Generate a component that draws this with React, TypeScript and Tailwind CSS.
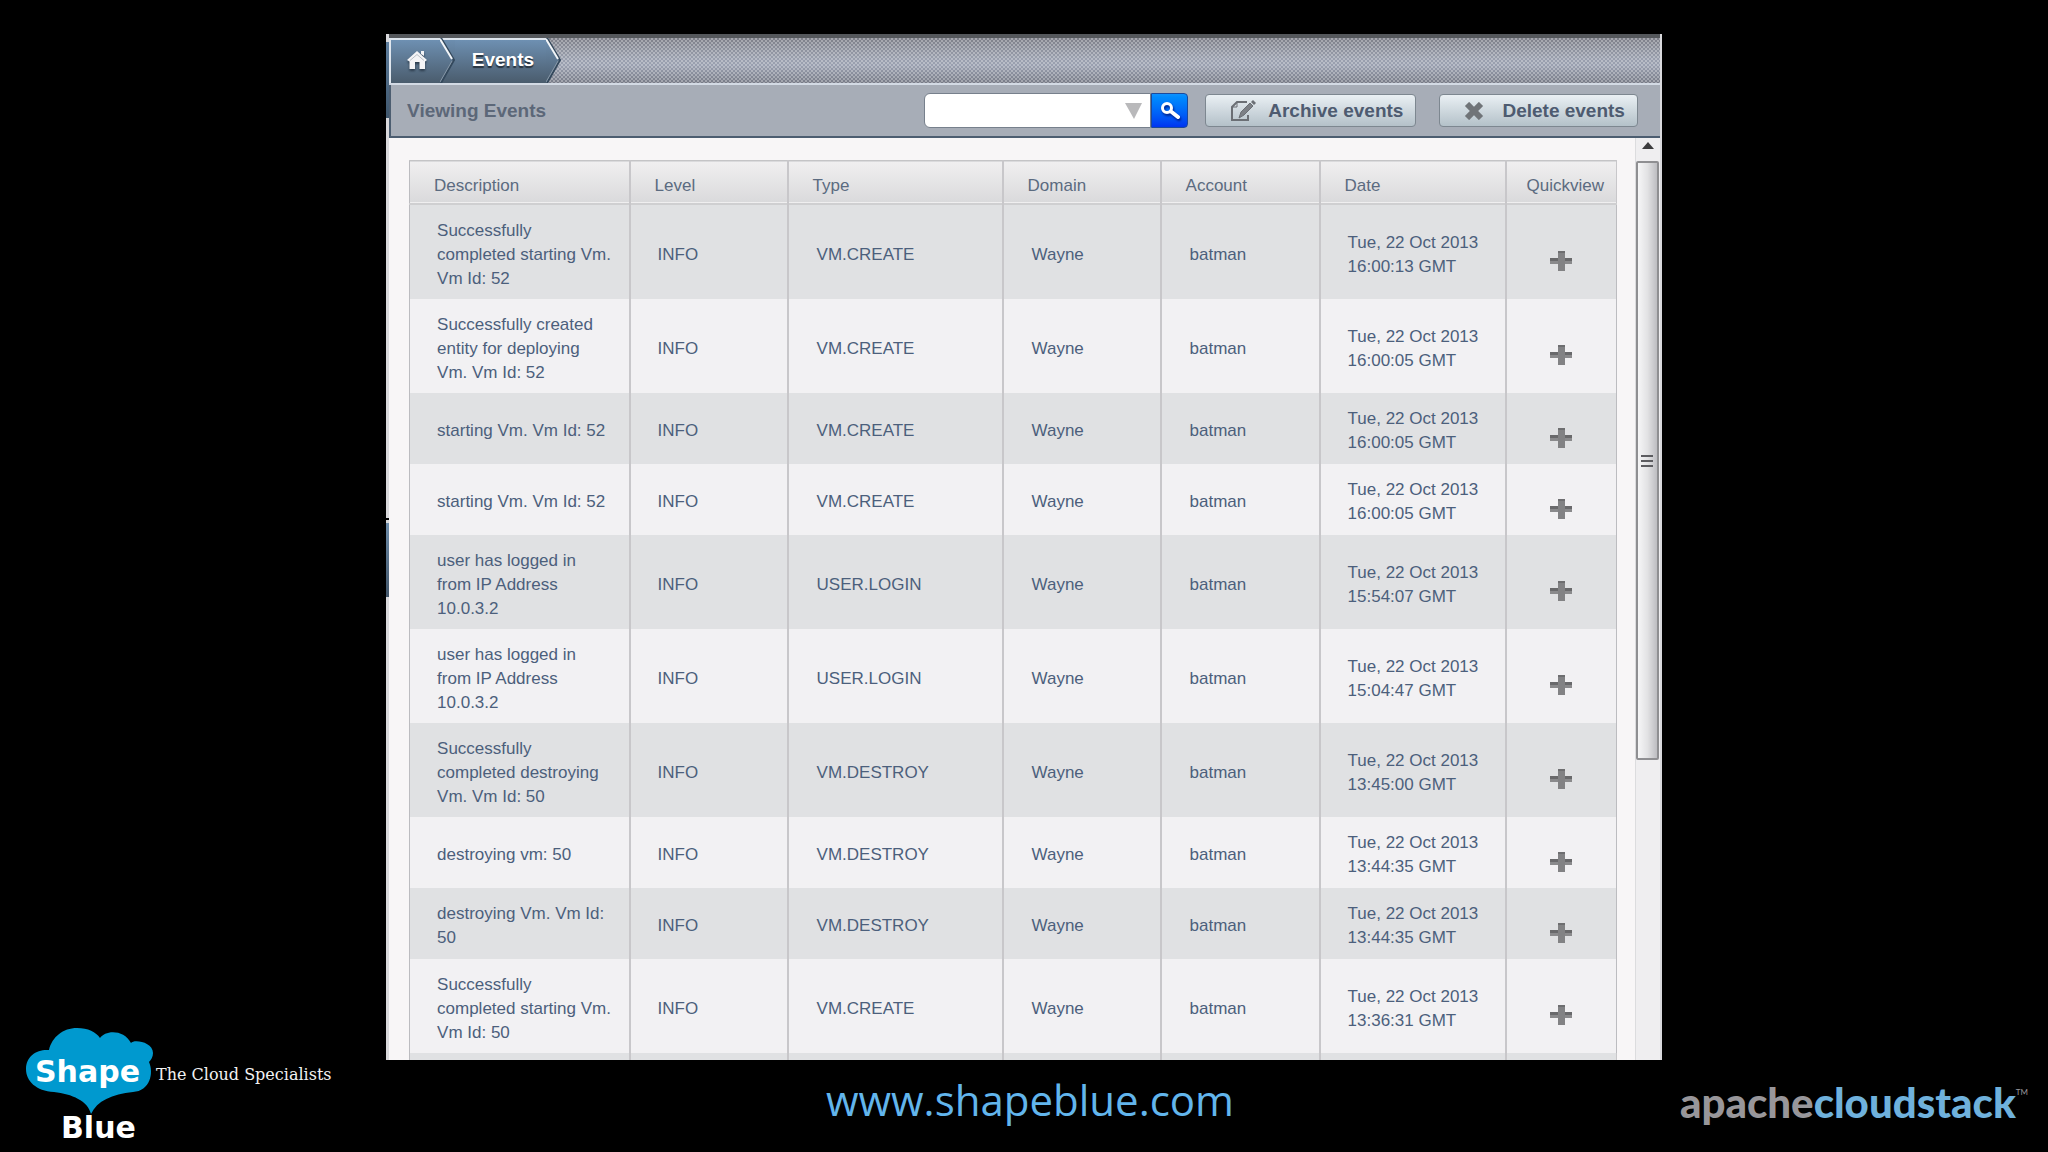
import type { ReactNode } from "react";

type EventRow = {
  description: string;
  type: string;
  time: string;
};

const events: EventRow[] = [
  { description: "Successfully\ncompleted starting Vm.\nVm Id: 52", type: "VM.CREATE", time: "16:00:13" },
  { description: "Successfully created\nentity for deploying\nVm. Vm Id: 52", type: "VM.CREATE", time: "16:00:05" },
  { description: "starting Vm. Vm Id: 52", type: "VM.CREATE", time: "16:00:05" },
  { description: "starting Vm. Vm Id: 52", type: "VM.CREATE", time: "16:00:05" },
  { description: "user has logged in\nfrom IP Address\n10.0.3.2", type: "USER.LOGIN", time: "15:54:07" },
  { description: "user has logged in\nfrom IP Address\n10.0.3.2", type: "USER.LOGIN", time: "15:04:47" },
  { description: "Successfully\ncompleted destroying\nVm. Vm Id: 50", type: "VM.DESTROY", time: "13:45:00" },
  { description: "destroying vm: 50", type: "VM.DESTROY", time: "13:44:35" },
  { description: "destroying Vm. Vm Id:\n50", type: "VM.DESTROY", time: "13:44:35" },
  { description: "Successfully\ncompleted starting Vm.\nVm Id: 50", type: "VM.CREATE", time: "13:36:31" },
];

const columns = [
  { label: "Description", width: "w-[220px]" },
  { label: "Level", width: "w-[158px]" },
  { label: "Type", width: "w-[215px]" },
  { label: "Domain", width: "w-[158px]" },
  { label: "Account", width: "w-[159px]" },
  { label: "Date", width: "w-[186px]" },
  { label: "Quickview", width: "w-[111px]" },
];

const HomeIcon = () => (
  <svg viewBox="0 0 20 20" className="h-5 w-5 drop-shadow-[0_2px_1px_#2c3c4c]" aria-hidden="true">
    <path d="M10 1 L20 10 L18 11.500 L18 19 L12.500 19 L12.500 12 L8 12 L8 19 L2.500 19 L2.500 11.500 L0 10 Z" fill="#f4f4f6" />
    <path d="M14 1 H17 V6 L14 4 Z" fill="#f4f4f6" />
    <path d="M3 10.500 L10 4.500 L17 10.500" fill="none" stroke="#b9bfc6" />
  </svg>
);

const Chevron = ({ last = false }: { last?: boolean }) => (
  <svg viewBox="0 0 15 45" className="h-[45px] w-[15px] shrink-0" aria-hidden="true">
    <defs>
      <linearGradient id="crumb" x1="0" y1="0" x2="0" y2="1">
        <stop offset="0" stopColor="#6e90b2" />
        <stop offset="1" stopColor="#4a5c6d" />
      </linearGradient>
    </defs>
    {!last && <rect width="15" height="45" fill="url(#crumb)" />}
    {!last && <rect width="15" height="2" fill="#dfe6ee" />}
    <path d="M0 0 L13 22 L0 45 Z" fill="url(#crumb)" />
    <path d="M1 0 L14 22 L1 45" fill="none" stroke="#33485c" strokeWidth="2" />
    <path d="M0 1 L12 21" fill="none" stroke="#f2f5f8" strokeWidth="2" />
    <path d="M12 23 L0 44" fill="none" stroke="#8798a8" />
  </svg>
);

const PencilIcon = () => (
  <svg viewBox="0 0 26 22" className="h-[22px] w-[26px]" fill="none" stroke="#6b6f75" strokeWidth="2" aria-hidden="true">
    <path d="M17 2 H7 L2 7 V20 H18 V15" />
    <path d="M7 2 V7 H2" strokeWidth="1" />
    <path d="M9 18 L11 12 L20 3 L23 6 L14 15 Z" fill="#7c8086" strokeWidth="1" />
    <path d="M21 2 L23 0 L26 3 L24 5 Z" fill="#6b6f75" stroke="none" />
  </svg>
);

const CrossIcon = () => (
  <svg viewBox="0 0 20 18" className="h-[18px] w-5" stroke="#707478" strokeWidth="6" aria-hidden="true">
    <path d="M3 2 L17 16 M17 2 L3 16" />
  </svg>
);

const SearchIcon = () => (
  <svg viewBox="0 0 20 18" className="h-[18px] w-5 drop-shadow-[1px_2px_1px_#00208c]" fill="none" stroke="#ffffff" aria-hidden="true">
    <circle cx="7" cy="6" r="4.500" strokeWidth="3" />
    <path d="M11 9.500 L18 15" strokeWidth="4" strokeLinecap="round" />
  </svg>
);

const PlusIcon = () => (
  <svg viewBox="0 0 22 20" className="h-5 w-[22px]" aria-hidden="true">
    <path d="M0 7 H22 V13 H0 Z" fill="#8a8a8c" />
    <path d="M0 7 H22 V10 H0 Z" fill="#69696b" />
    <path d="M8 0 H15 V20 H8 Z" fill="#828284" />
    <path d="M8 0 H15 V2 H8 Z" fill="#6e6e70" />
  </svg>
);

const ActionButton = ({ icon, children }: { icon: ReactNode; children: ReactNode }) => (
  <button
    type="button"
    className="flex h-[33px] items-center gap-3 rounded-sm border border-[#7d8790] bg-linear-to-b from-[#eaf0f4] to-[#b4c1c9] pr-3 pl-6 text-[19px] leading-7 font-bold text-[#4e5b70]"
  >
    {icon}
    {children}
  </button>
);

const Breadcrumbs = () => (
  <nav
    aria-label="Breadcrumb"
    className="flex h-[51px] border-t-4 border-b-2 border-t-[#55585c] border-b-[#d3dae4] bg-[conic-gradient(rgba(255,255,255,0.3)_25%,transparent_0_50%,rgba(255,255,255,0.3)_0_75%,transparent_0),linear-gradient(to_bottom,#7d7f88,#989eac_45%,#9aa0b0_60%,#777b87)] [background-size:4px_4px,100%_100%]"
  >
    <a href="#home" aria-label="Home" className="flex w-[51px] items-center border-t-2 border-l-2 border-[#dfe6ee] bg-linear-to-b from-[#6e90b2] to-[#4a5c6d] pb-1 pl-4">
      <HomeIcon />
    </a>
    <Chevron />
    <a
      href="#events"
      className="flex w-[91px] items-center justify-end border-t-2 border-[#dfe6ee] bg-linear-to-b from-[#6e90b2] to-[#4a5c6d] pr-3 pb-0.5 text-[19px] font-bold text-white text-shadow-[0_2px_1px_#26323e]"
    >
      Events
    </a>
    <Chevron last />
  </nav>
);

const Toolbar = () => (
  <div className="flex h-[53px] items-center border-b-2 border-l-2 border-[#4c5d70] bg-[#a7adb7] pr-[22px] pl-4">
    <h1 className="flex-1 pt-0.5 text-[19px] font-bold text-[#5c6778]">Viewing Events</h1>
    <form className="mr-[17px] flex h-[35px]">
      <div className="flex w-[227px] items-center rounded-l-md border border-[#77808c] bg-white pr-2">
        <input type="text" aria-label="Search events" className="h-full min-w-0 flex-1 bg-transparent px-2 text-lg outline-none" />
        <button type="button" aria-label="Advanced search">
          <svg viewBox="0 0 17 16" className="h-4 w-[17px]" aria-hidden="true">
            <path d="M0 0 H17 L9 16 Z" fill="#b9b9bb" />
          </svg>
        </button>
      </div>
      <button
        type="button"
        aria-label="Search"
        className="flex w-[37px] items-center justify-center rounded-r-sm border border-[#1c4a9c] bg-linear-to-b from-[#0d92ff] to-[#0033f0]"
      >
        <SearchIcon />
      </button>
    </form>
    <div className="flex gap-[23px]">
      <ActionButton icon={<PencilIcon />}>Archive events</ActionButton>
      <ActionButton icon={<CrossIcon />}>
        <span className="pl-1.5">Delete events</span>
      </ActionButton>
    </div>
  </div>
);

const EventsTable = () => (
  <table className="w-full table-fixed border-collapse border-x border-[#bcbcc0] text-left text-[17px] leading-6 text-[#4c5f7c]">
    <thead>
      <tr className="h-[43px] border-t border-b-2 border-t-[#c4c4c6] border-b-[#cfcfd1] bg-linear-to-b from-[#f0eff0] to-[#dadadc] text-[#5b6b80]">
        {columns.map(({ label, width }) => (
          <th key={label} scope="col" className={`${width} border-r-2 border-[#c8c7ca] pt-2 pl-6 font-normal last:border-r last:pl-5`}>
            {label}
          </th>
        ))}
      </tr>
    </thead>
    <tbody>
      {events.map(({ description, type, time }, index) => (
        <tr key={index} className="h-[71px] odd:bg-[#e0e1e3] even:bg-[#f2f1f3]">
          <td className="border-r-2 border-[#c8c7ca] pt-[14px] pb-2 pl-[27px] whitespace-pre">{description}</td>
          <td className="border-r-2 border-[#c8c7ca] pt-1.5 pl-[27px]">INFO</td>
          <td className="border-r-2 border-[#c8c7ca] pt-1.5 pl-7">{type}</td>
          <td className="border-r-2 border-[#c8c7ca] pt-1.5 pl-7">Wayne</td>
          <td className="border-r-2 border-[#c8c7ca] pt-1.5 pl-7">batman</td>
          <td className="border-r-2 border-[#c8c7ca] pt-1.5 pr-5 pl-[27px]">Tue, 22 Oct 2013 {time} GMT</td>
          <td className="pt-[18px] text-center">
            <button type="button" aria-label={`Quickview of event ${index + 1}`} className="align-middle">
              <PlusIcon />
            </button>
          </td>
        </tr>
      ))}
      <tr className="h-[71px] bg-[#e0e1e3]">
        {columns.map(({ label }) => (
          <td key={label} className="border-r-2 border-[#c8c7ca] last:border-r" />
        ))}
      </tr>
    </tbody>
  </table>
);

const ScrollBar = () => (
  <div className="flex w-[25px] flex-col border-l border-[#dcdcde] bg-[#efeef0]" aria-hidden="true">
    <div className="flex h-[23px] justify-center pt-1">
      <svg viewBox="0 0 12 8" className="h-2 w-3">
        <path d="M6 0 L12 7 H0 Z" fill="#3c3c3e" />
      </svg>
    </div>
    <div className="flex h-[65%] w-[23px] items-center justify-center rounded-xs border-2 border-[#8f8f92] bg-linear-to-r from-[#f6f6f7] via-[#e2e2e4] to-[#bdbdc1]">
      <div className="flex w-3 flex-col gap-[3px]">
        <div className="h-0.5 bg-[#5c5c60]" />
        <div className="h-0.5 bg-[#5c5c60]" />
        <div className="h-0.5 bg-[#5c5c60]" />
      </div>
    </div>
  </div>
);

// Sliver of the navigation menu that stays visible beside the panel
const NavEdge = () => (
  <div className="flex w-[3px] flex-col bg-[#d9d9dc]">
    <div className="mt-2 h-[76px] bg-linear-to-b from-[#5f7f9f] to-[#3f566c]" />
    <div className="mt-[400px] h-0.5 bg-black" />
    <div className="mt-[3px] h-[74px] bg-linear-to-b from-[#6e8dab] to-[#42566a]" />
  </div>
);

const ShapeBlueLogo = () => (
  <svg viewBox="0 0 340 120" className="h-[120px] w-[340px]" role="img" aria-label="Shape Blue, The Cloud Specialists">
    <path
      d="M91 86 C88 73 72 66 54 64 C36 63 26 53 26 41 C26 28 37 21 49 22 C52 9 63 0 77 0 C88 0 96 4 100 10 C105 2 124 1 131 15 C134 11 153 14 153 25 C153 29 151 32 149 34 C154 45 150 63 133 64 C112 66 97 73 91 86 Z"
      fill="#0099cf"
    />
    <g fill="#ffffff" fontFamily="DejaVu Sans, sans-serif" fontWeight="700" fontSize="30">
      <text x="35" y="54">Shape</text>
      <text x="61" y="110">Blue</text>
    </g>
    <text x="156" y="52" fill="#f2f2f2" fontFamily="DejaVu Serif, serif" fontSize="16">The Cloud Specialists</text>
  </svg>
);

const Footer = () => (
  <footer className="grid h-[92px] shrink-0 grid-cols-3 items-center">
    <div className="-mt-9">
      <ShapeBlueLogo />
    </div>
    <a href="#shapeblue" className="pb-3 pl-3 text-center font-['Open_Sans',sans-serif] text-[42px] leading-[52px] text-[#62b5ec]">
      www.shapeblue.com
    </a>
    <div className="flex items-start justify-end pr-5 pb-2 font-['Lato',sans-serif] text-[42px] leading-[52px] font-black">
      <span className="text-[#98969a]">apache</span>
      <span className="text-[#6fb1dc]">cloudstack</span>
      <span className="text-[8px] leading-8 font-normal text-[#98969a]">TM</span>
    </div>
  </footer>
);

export default function App() {
  return (
    <div className="flex h-screen flex-col overflow-hidden bg-black pt-[34px] font-['Liberation_Sans',Arial,sans-serif]">
      <main className="mx-auto flex min-h-0 w-[62.3%] flex-1 overflow-hidden">
        <NavEdge />
        <section className="flex min-w-0 flex-1 flex-col border-r-2 border-[#d9d9dc] bg-[#f8f6f7]">
          <Breadcrumbs />
          <Toolbar />
          <div className="flex min-h-0 flex-1">
            <div className="min-w-0 flex-1 overflow-hidden pt-[22px] pr-[19px] pl-5">
              <EventsTable />
            </div>
            <ScrollBar />
          </div>
        </section>
      </main>
      <Footer />
    </div>
  );
}
